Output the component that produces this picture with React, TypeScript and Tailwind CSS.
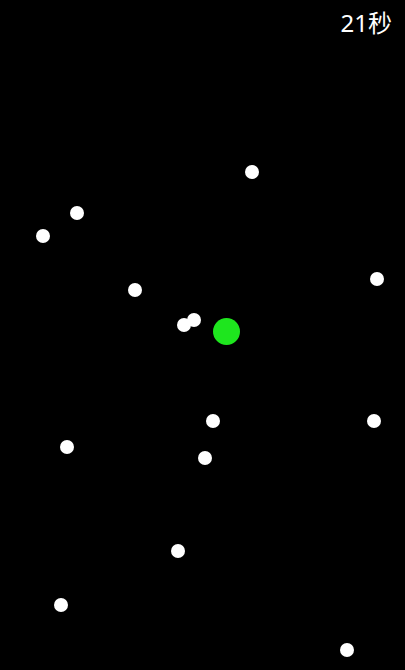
const dots: [number, number][] = [
    [252, 172],
    [77, 213],
    [43, 236],
    [377, 279],
    [135, 290],
    [194, 320],
    [184, 325],
    [213, 421],
    [374, 421],
    [67, 447],
    [205, 458],
    [178, 551],
    [61, 605],
    [347, 650],
];

export default function App() {
    return (
        <div className="relative w-[405px] h-[670px] bg-black overflow-hidden">
            <div className="flex justify-end pt-[11px] pr-[13px]">
                <span
                    className="text-white text-[24px] leading-none"
                    style={{ fontFamily: '"Noto Sans", "Noto Sans CJK SC", sans-serif' }}
                >
                    21秒
                </span>
            </div>
            {dots.map(([x, y], i) => (
                <div
                    key={i}
                    className="absolute w-[14px] h-[14px] rounded-full bg-white"
                    style={{ left: x - 7, top: y - 7 }}
                />
            ))}
            <div className="absolute left-[213px] top-[318px] w-[27px] h-[27px] rounded-full bg-[#1ee61e]" />
        </div>
    );
}
